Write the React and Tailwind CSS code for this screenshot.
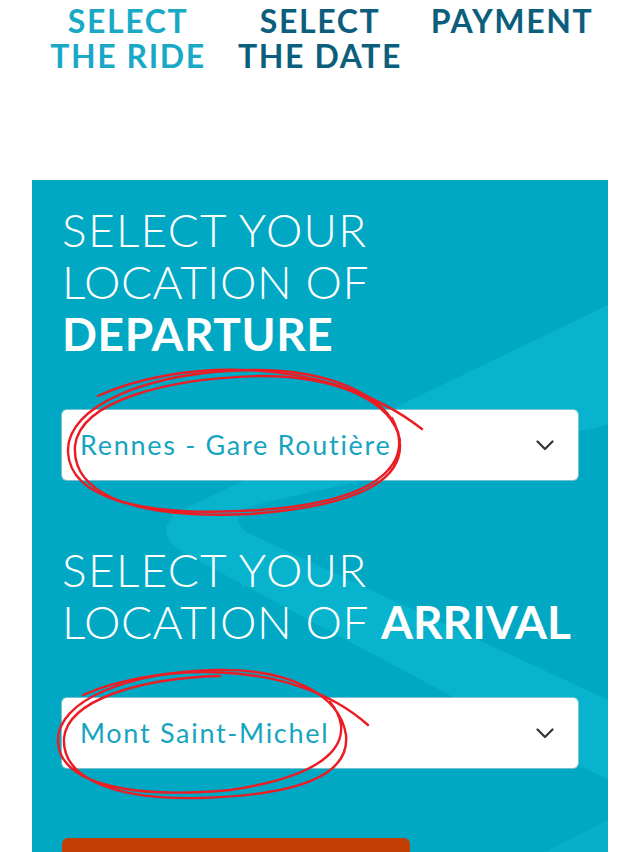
const steps = [
  { top: "SELECT", bottom: "THE RIDE", active: true },
  { top: "SELECT", bottom: "THE DATE", active: false },
  { top: "PAYMENT", bottom: "", active: false },
];

function Chevron() {
  return (
    <svg width="18" height="11" viewBox="0 0 18 11" fill="none">
      <polyline points="1.5,1.5 9,9 16.5,1.5" stroke="#2f3438" strokeWidth="2.2" strokeLinecap="round" strokeLinejoin="round" />
    </svg>
  );
}

function Select({ value }) {
  return (
    <div className="flex h-[70px] items-center justify-between rounded-[5px] bg-white pl-[18px] pr-[24px] shadow-[0_0_0_1px_rgba(200,210,215,0.6)]">
      <span className="text-[27px] tracking-[1.7px] text-[#17a4bf]">{value}</span>
      <Chevron />
    </div>
  );
}

// red hand-drawn circles on top of the screenshot
function Scribbles() {
  return (
    <svg className="pointer-events-none absolute left-0 top-0" width="640" height="852" fill="none" stroke="#ec1c24" strokeWidth="2.4" strokeLinecap="round">
      <path d="M98 396 C 170 362, 320 350, 422 429" />
      <path d="M392 418 C 412 455, 395 500, 260 510 C 140 518, 70 498, 68 452 C 66 405, 150 372, 250 370 C 330 369, 385 395, 398 432 C 410 475, 370 505, 250 514 C 120 520, 72 488, 75 446 C 80 400, 170 378, 260 376 C 340 376, 392 402, 400 440" />
      <path d="M83 695 C 150 665, 290 655, 368 725" />
      <path d="M330 702 C 352 728, 352 772, 230 790 C 120 800, 60 780, 58 742 C 56 700, 130 672, 215 670 C 290 668, 340 695, 346 735 C 350 775, 300 795, 200 798 C 100 800, 62 772, 64 738 C 68 700, 140 678, 220 676" />
    </svg>
  );
}

export default function App() {
  return (
    <div className="relative h-[852px] w-[640px] overflow-hidden bg-white font-['Lato',sans-serif]">
      <div className="grid grid-cols-3 px-8 pt-[3px] text-center">
        {steps.map((s) => (
          <div key={s.top + s.bottom} className={`flex flex-col text-[32px] font-bold leading-[35px] tracking-[1.6px] ${s.active ? "text-[#19a9c7]" : "text-[#0c5e7d]"}`}>
            <span>{s.top}</span>
            {s.bottom && <span>{s.bottom}</span>}
          </div>
        ))}
      </div>

      <div className="relative mx-8 mt-[107px] h-[720px] overflow-hidden bg-[#01a8c4]">
        <svg className="absolute inset-0" width="576" height="720" viewBox="0 0 576 720">
          <path d="M576 125 L150 330 Q118 350 150 372 L576 600 Z" fill="#08b3ce" />
          <path d="M576 245 L218 326 Q196 336 214 352 L576 520 Z" fill="#01a8c4" />
          <path d="M576 640 L420 720 L576 720 Z" fill="#06b0cb" />
        </svg>
        <div className="relative px-[30px] pt-[24px]">
          <h2 className="text-[46px] font-light leading-[52px] tracking-[0.6px] text-white">
            <div className="tracking-[1.3px]">SELECT YOUR</div>
            <div>LOCATION OF</div>
            <div className="font-bold">DEPARTURE</div>
          </h2>
          <div className="mt-[50px]">
            <Select value="Rennes - Gare Routière" />
          </div>
          <h2 className="mt-[64px] text-[46px] font-light leading-[52px] tracking-[0.6px] text-white">
            <div className="tracking-[1.3px]">SELECT YOUR</div>
            <div>
              LOCATION OF <span className="font-bold tracking-normal">ARRIVAL</span>
            </div>
          </h2>
          <div className="mt-[50px]">
            <Select value="Mont Saint-Michel" />
          </div>
          <button className="mt-[70px] h-[64px] w-[348px] rounded-[6px] bg-[#c23e05]" />
        </div>
      </div>

      <Scribbles />
    </div>
  );
}
